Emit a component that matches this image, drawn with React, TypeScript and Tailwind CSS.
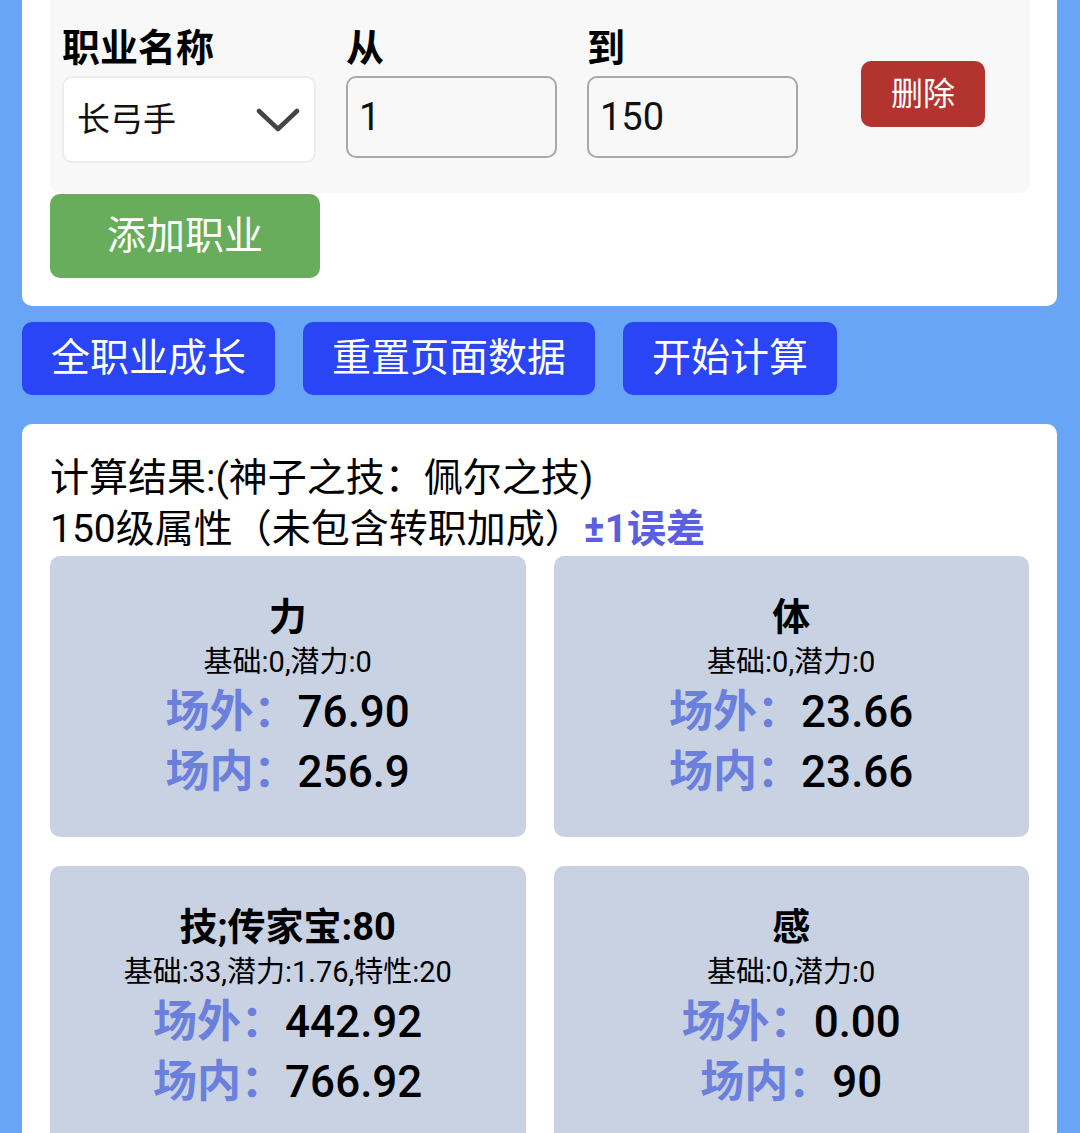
const font = { fontFamily: "Roboto, 'Noto Sans CJK SC', sans-serif" };

type Stat = {
  title: string;
  sub: string;
  outside: string;
  inside: string;
};

const stats: Stat[] = [
  { title: "力", sub: "基础:0,潜力:0", outside: "76.90", inside: "256.9" },
  { title: "体", sub: "基础:0,潜力:0", outside: "23.66", inside: "23.66" },
  { title: "技;传家宝:80", sub: "基础:33,潜力:1.76,特性:20", outside: "442.92", inside: "766.92" },
  { title: "感", sub: "基础:0,潜力:0", outside: "0.00", inside: "90" },
];

function StatCard({ stat }: { stat: Stat }) {
  return (
    <div className="h-[281px] rounded-[10px] bg-[#c8d2e3] pt-[38px] flex flex-col items-center text-black">
      <div className="text-[38px] leading-[46px] font-bold">{stat.title}</div>
      <div className="text-[29px] leading-[44px]">{stat.sub}</div>
      <div className="flex items-center text-[44px] leading-[56px]">
        <span className="font-semibold text-[#6b7fdc]">场外：</span>
        <span className="font-medium">{stat.outside}</span>
      </div>
      <div className="flex items-center text-[44px] leading-[64px]">
        <span className="font-semibold text-[#6b7fdc]">场内：</span>
        <span className="font-medium">{stat.inside}</span>
      </div>
    </div>
  );
}

export default function App() {
  return (
    <div className="min-h-screen bg-[#69a5f7] pl-[22px] pr-[23px] overflow-hidden" style={font}>
      {/* Job editor card */}
      <div className="bg-white rounded-b-[10px] pl-[28px] pr-[27px] pb-[28px]">
        <div className="bg-[#f8f8f8] rounded-b-[10px] h-[193px] pl-[12px] pt-[25px] flex items-start gap-[30px]">
          <div className="flex flex-col">
            <label className="text-[38px] leading-[46px] font-bold text-black">职业名称</label>
            <div className="mt-[5px] w-[254px] h-[87px] bg-white border-2 border-[#ececec] rounded-[10px] flex items-center justify-between pl-[13px] pr-[14px]">
              <span className="text-[33px] text-[#111]">长弓手</span>
              <svg width="44" height="26" viewBox="0 0 44 26" fill="none">
                <polyline points="3,4 22,22 41,4" stroke="#444" strokeWidth="4.5" strokeLinecap="round" strokeLinejoin="round" />
              </svg>
            </div>
          </div>
          <div className="flex flex-col">
            <label className="text-[38px] leading-[46px] font-bold text-black">从</label>
            <div className="mt-[5px] w-[211px] h-[82px] bg-[#f8f8f8] border-2 border-[#a9a9a9] rounded-[10px] flex items-center pl-[11px]">
              <span className="text-[38px] text-[#111]">1</span>
            </div>
          </div>
          <div className="flex flex-col">
            <label className="text-[38px] leading-[46px] font-bold text-black">到</label>
            <div className="mt-[5px] w-[211px] h-[82px] bg-[#f8f8f8] border-2 border-[#a9a9a9] rounded-[10px] flex items-center pl-[11px]">
              <span className="text-[38px] text-[#111]">150</span>
            </div>
          </div>
          <button className="ml-[33px] mt-[36px] w-[124px] h-[66px] rounded-[10px] bg-[#b3342f] text-white text-[32px]">
            删除
          </button>
        </div>
        <button className="mt-px w-[270px] h-[84px] rounded-[10px] bg-[#67ad5b] text-white text-[39px]">
          添加职业
        </button>
      </div>

      {/* Action buttons */}
      <div className="mt-[16px] flex gap-[28px]">
        <button className="w-[253px] h-[73px] rounded-[10px] bg-[#2a45f5] text-white text-[39px]">全职业成长</button>
        <button className="w-[292px] h-[73px] rounded-[10px] bg-[#2a45f5] text-white text-[39px]">重置页面数据</button>
        <button className="w-[214px] h-[73px] rounded-[10px] bg-[#2a45f5] text-white text-[39px]">开始计算</button>
      </div>

      {/* Results */}
      <div className="mt-[29px] bg-white rounded-t-[10px] px-[28px] pt-[29px] pb-[40px]">
        <div className="text-[39px] leading-[51px] text-black">计算结果:(神子之技：佩尔之技)</div>
        <div className="text-[39px] leading-[51px] text-black">
          150级属性（未包含转职加成）<span className="font-bold text-[#5a5fdf]">±1误差</span>
        </div>
        <div className="mt-[1px] grid grid-cols-2 gap-x-[28px] gap-y-[29px]">
          {stats.map((s) => (
            <StatCard key={s.title} stat={s} />
          ))}
        </div>
      </div>
    </div>
  );
}
